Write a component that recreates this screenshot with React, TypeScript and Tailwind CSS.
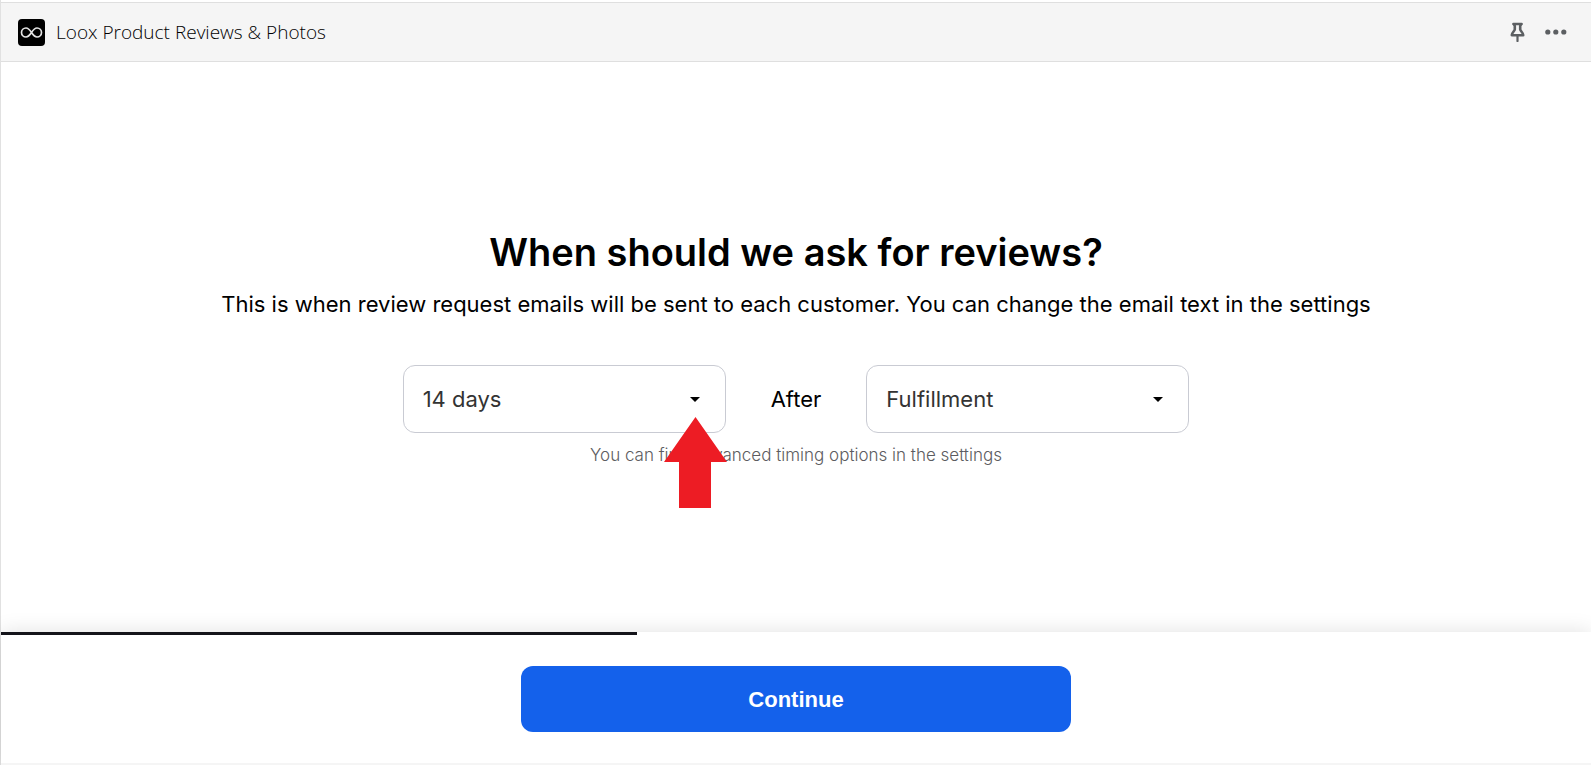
import { useState, type ReactNode } from "react";

type SelectFieldProps = {
  label: string;
  options: string[];
  value: string;
  onChange: (value: string) => void;
  children?: ReactNode;
};

const DELAYS = ["3 days", "7 days", "14 days", "21 days", "30 days"];
const EVENTS = ["Fulfillment", "Purchase", "Delivery"];

function SelectField({ label, options, value, onChange, children }: SelectFieldProps) {
  return (
    <div className="relative w-[323px]">
      <select
        aria-label={label}
        value={value}
        onChange={(e) => onChange(e.target.value)}
        className="block h-[68px] w-full appearance-none rounded-xl border border-[#c9cbd3] bg-white pt-[2px] pr-12 pl-[19px] text-[22px] text-[#333333]"
      >
        {options.map((o) => (
          <option key={o}>{o}</option>
        ))}
      </select>
      <svg className="pointer-events-none absolute top-8 right-[26px]" width="10" height="5" viewBox="0 0 10 5">
        <path d="M0 0h10L5 5z" fill="#000" />
      </svg>
      {children}
    </div>
  );
}

function LooxLogo() {
  return (
    <svg width="27" height="27" viewBox="0 0 27 27" fill="none">
      <rect width="27" height="27" rx="4" fill="#000" />
      <path
        d="M13.5 13.5C11.6 10.6 10.2 9 8 9a4.5 4.5 0 0 0 0 9c2.2 0 3.6-1.6 5.5-4.5S16.8 9 19 9a4.5 4.5 0 0 1 0 9c-2.2 0-3.6-1.6-5.5-4.5z"
        stroke="#e4e4e4"
        strokeWidth="1.7"
      />
    </svg>
  );
}

export default function App() {
  const [delay, setDelay] = useState("14 days");
  const [event, setEvent] = useState("Fulfillment");

  return (
    <div className="flex min-h-screen flex-col border-l border-[#e1e1e1] bg-white pt-[2px] font-['Inter',sans-serif] text-black">
      {/* App bar */}
      <header className="flex h-[60px] items-center justify-between border-y border-[#dfdfdf] bg-[#f5f5f5] pr-6 pl-[17px]">
        <div className="flex items-center gap-[11px]">
          <LooxLogo />
          <span className="font-['Open_Sans',sans-serif] text-[19px] leading-6 font-light text-black">
            Loox Product Reviews &amp; Photos
          </span>
        </div>
        <div className="flex items-center gap-5 text-[#5c5f62]">
          <button type="button" aria-label="Pin app">
            <svg width="15" height="20" viewBox="0 0 15 20" fill="none" stroke="currentColor" strokeWidth="2.6">
              <path d="M3.4 2h8.2" strokeLinecap="round" />
              <path d="M4 2.4l.8 1.4v3.6C4.6 9.2 2 10.2 1.8 13.2h11.4C13 10.2 10.4 9.2 10.2 7.4V3.8l.8-1.4" strokeLinejoin="round" />
              <path d="M7.5 14v5" strokeWidth="2.2" strokeLinecap="round" />
            </svg>
          </button>
          <button type="button" aria-label="More actions">
            <svg width="22" height="6" viewBox="0 0 22 6" fill="currentColor">
              <circle cx="2.8" cy="3" r="2.6" />
              <circle cx="10.8" cy="3" r="2.6" />
              <circle cx="18.8" cy="3" r="2.6" />
            </svg>
          </button>
        </div>
      </header>

      <main className="flex flex-1 flex-col items-center justify-center px-4 text-center">
        <h1 className="text-[38px] leading-[48px] font-semibold">When should we ask for reviews?</h1>
        <p className="mt-3 text-[22px] leading-8">
          This is when review request emails will be sent to each customer. You can change the email text in the settings
        </p>
        <div className="mt-[45px] flex flex-wrap items-center justify-center gap-[45px]">
          <SelectField label="Delay" options={DELAYS} value={delay} onChange={setDelay}>
            {/* Pointer under the caret */}
            <svg className="pointer-events-none absolute top-[52px] -right-px z-10" width="63" height="91" viewBox="0 0 63 91">
              <path d="M31.5 0L63 45H47v46H15V45H0z" fill="#ed1c24" />
            </svg>
          </SelectField>
          <span className="text-[22px] leading-8">After</span>
          <SelectField label="Event" options={EVENTS} value={event} onChange={setEvent} />
        </div>
        <p className="mt-[10px] text-[17px] leading-6 font-light text-[#5c5c60]">You can find advanced timing options in the settings</p>
      </main>

      {/* Progress and next step */}
      <footer className="border-b-2 border-[#f5f5f5] bg-white shadow-[0_0_20px_rgba(0,0,0,0.12)]">
        <div className="h-[3px] w-2/5 bg-[#14141a]" />
        <div className="flex justify-center px-4 pt-[31px] pb-[31px]">
          <button
            type="button"
            className="h-[66px] w-full max-w-[550px] rounded-xl bg-[#1461eb] font-['Liberation_Sans',sans-serif] text-[22px] font-bold text-white"
          >
            Continue
          </button>
        </div>
      </footer>
    </div>
  );
}
